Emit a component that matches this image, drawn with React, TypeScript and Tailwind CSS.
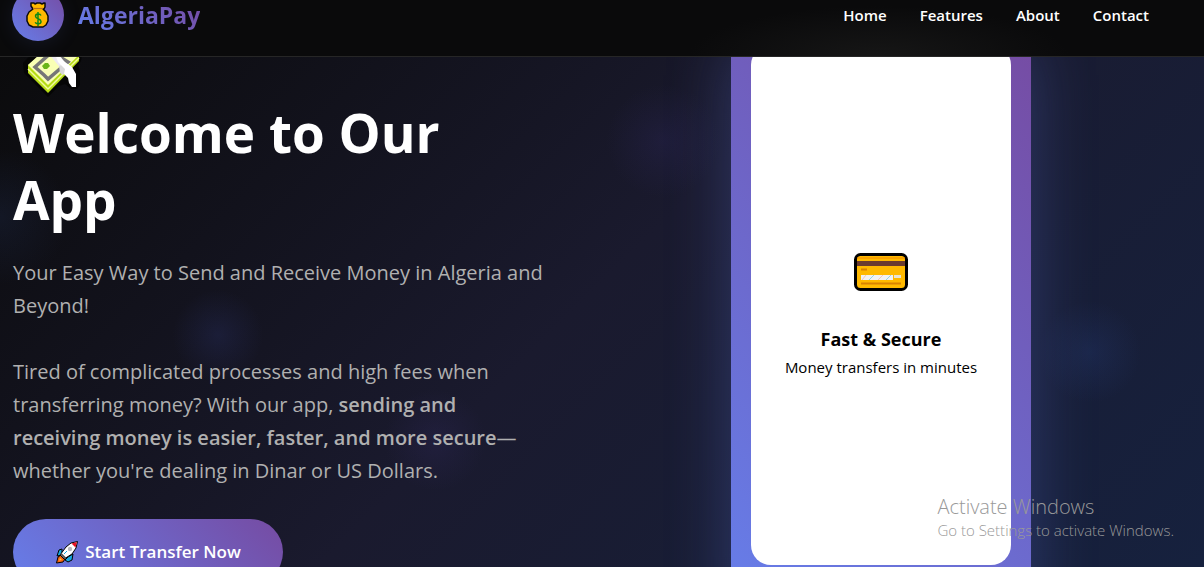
import React from "react";

function MoneyBag() {
  return (
    <svg viewBox="0 0 24 28" className="h-7 w-6" aria-hidden="true">
      <path d="M5 2h3l1 1 2-1h3l2 1 2-1h1v4l-1 2h-1l3 3 2 4v5l-2 4-3 2H7l-4-2-2-4v-5l2-4 4-3-2-3z" fill="#ffb900" stroke="#0b0b0b" strokeWidth="1.5" strokeLinejoin="round" />
      <path d="M7 7.5h10" stroke="#b8701a" strokeWidth="1.200" />
      <path d="M12 11v14M15 14.500c-1-2-5.500-2-5.500.8 0 3 5.500 2 5.500 5.200 0 3-4.800 3-5.800.8" fill="none" stroke="#0f8a16" strokeWidth="1.5" />
    </svg>
  );
}

function WingedMoney() {
  return (
    <svg viewBox="0 0 64 64" className="block size-16" aria-hidden="true">
      <path d="M1 30 24 6 50 8l10 12-1 8-3 4 2 6v14l-3 4h-6l-6-5-6 2-11 11L2 40z" fill="#050505" />
      <path d="M6 32v8l20 20 31-32v-6L30 12z" fill="#b6dc14" />
      <path d="M6 36l20 20 31-31" fill="none" stroke="#f2fba0" strokeWidth="1.500" />
      <path d="M6 32 28 12l29 10-31 30z" fill="#f9ffb5" />
      <path d="M13 34 30 19l16 10-20 17-4-4z" fill="none" stroke="#777" strokeWidth="3.500" />
      <path d="m20 33 3-3h3l2 3-3 3h-3z" fill="#69b516" />
      <path d="M26 20 41 38l5-3-9-14z" fill="#eeeaf2" />
      <path d="m37 33 6-2 3 4-5 7-3-2z" fill="#d8d8d8" />
      <path d="M32 18 43 29l7 5 4 7v13h-4l-3-4-1-5-4-4 1-5-7-7z" fill="#fff" />
    </svg>
  );
}

function CreditCard() {
  return (
    <svg viewBox="0 0 54 38" className="block h-[38px] w-[54px]" aria-hidden="true">
      <rect x="1.500" y="1.500" width="51" height="35" rx="5" fill="#ffb900" stroke="#000" strokeWidth="3" />
      <path d="M3 5h48" stroke="#f28c00" />
      <path d="M3 8h48v5H3z" fill="#6b3b30" />
      <path d="M7 16.500h6M7 30.500h40" stroke="#d98300" strokeWidth="2" />
      <path d="M7 22h32v5H7z" fill="#f2f2f2" />
      <path d="M40 22h7v3h-7z" fill="#e9e3d3" />
      <path d="m15 27 5-5m12 5 5-5" stroke="#8fd4e8" />
      <path d="m8 27 4-5m12 5 5-5" stroke="#f4c7b8" />
    </svg>
  );
}

function Rocket() {
  return (
    <svg viewBox="0 0 24 24" className="size-6" aria-hidden="true">
      <path d="m7 9-3 1-2 6 5-1zM13 17l-3 3 3 2 4-2 1-6z" fill="#16a8e0" stroke="#000" />
      <path d="m3 17-1.500 6L8 22l2-3-4-4z" fill="#f7630c" stroke="#000" />
      <path d="M4 20.500 5 18l2 2z" fill="#ffc83d" />
      <path d="M22.500 1.500 16 3l-5 4-6 8 4 4 8-5 4-6z" fill="#fff" stroke="#000" />
      <path d="m5.500 15 4 4 2-1-5-5z" fill="#555" />
      <path d="M16.500 3.500 22 2l-1.500 5.500z" fill="#e81224" />
      <circle cx="15" cy="9" r="2.200" fill="#b9b9bd" />
      <path d="m9 14 3-3" stroke="#16a8e0" />
    </svg>
  );
}

const links = ["Home", "Features", "About", "Contact"];

const glows = [
  "left-[-80px] top-[80px] bg-[radial-gradient(circle,rgba(40,60,110,0.2)_0%,transparent_60%)]",
  "left-[138px] top-[198px] bg-[radial-gradient(circle,rgba(50,60,130,0.24)_0%,transparent_40%)]",
  "left-[355px] top-[303px] bg-[radial-gradient(circle,rgba(60,50,120,0.2)_0%,transparent_45%)]",
  "left-[583px] top-[4px] bg-[radial-gradient(circle,rgba(60,50,130,0.18)_0%,transparent_50%)]",
  "left-[1010px] top-[215px] bg-[radial-gradient(circle,rgba(45,75,150,0.2)_0%,transparent_45%)]",
];

export default function App() {
  return (
    <div className="relative flex h-screen flex-col overflow-hidden bg-[linear-gradient(135deg,#0a0a0a_0%,#1a1a2e_50%,#16213e_100%)] font-['Open_Sans','Noto_Sans',sans-serif] text-white">
      <header className="relative z-10 -mt-[26px] flex h-[83px] shrink-0 items-center justify-between border-b border-[#262626] bg-[#0a0a0b] bg-[radial-gradient(190px_50px_at_73%_100%,#161616,transparent)] pl-3 pr-[55px]">
        <a href="#home" className="flex items-center gap-[14px]">
          <span className="flex size-[52px] items-center justify-center rounded-full bg-[linear-gradient(45deg,#667eea,#764ba2)] shadow-[0_4px_20px_rgba(102,126,234,0.1)]">
            <MoneyBag />
          </span>
          <span className="bg-[linear-gradient(45deg,#667eea,#764ba2)] bg-clip-text text-[23px] leading-8 font-bold text-transparent">AlgeriaPay</span>
        </a>
        <nav className="flex gap-[33px] text-[15px] leading-6 font-semibold">
          {links.map((l) => (
            <a key={l} href={"#" + l.toLowerCase()}>{l}</a>
          ))}
        </nav>
      </header>

      <main className="relative min-h-0 flex-1 overflow-hidden">
        {glows.map((g) => (
          <div key={g} className={"pointer-events-none absolute size-[160px] rounded-full " + g} />
        ))}
        <div className="relative grid grid-cols-2 items-start gap-16 pl-[13px] pr-[55px]">
          <section>
            <div className="-mt-6 pl-[9px]">
              <WingedMoney />
            </div>
            <h1 className="mt-[2px] text-[53px] leading-[67px] font-bold">Welcome to Our App</h1>
            <div className="mt-[23px] flex flex-col gap-[33px] text-[20px] leading-[33px] text-[#b0b0b0]">
              <p>Your Easy Way to Send and Receive Money in Algeria and Beyond!</p>
              <p>
                Tired of complicated processes and high fees when transferring money? With our app,{" "}
                <strong className="font-semibold">sending and <br />receiving money is easier, faster, and more secure</strong>—<wbr />whether you're dealing in Dinar or US Dollars.
              </p>
            </div>
            <button type="button" className="mt-8 flex h-[66px] w-[270px] items-center justify-center gap-[6px] rounded-full bg-[linear-gradient(45deg,#667eea,#764ba2)] text-[17px] font-semibold">
              <Rocket />
              Start Transfer Now
            </button>
          </section>

          <section className="-mt-8 flex justify-center">
            <div className="w-[300px] bg-[linear-gradient(45deg,#667eea,#764ba2)] p-5 pb-10 shadow-[0_20px_60px_rgba(102,126,234,0.3)]">
              <div className="flex h-[520px] flex-col items-center rounded-[20px] bg-white pt-[208px] text-black">
                <CreditCard />
                <h2 className="mt-[34px] text-[18px] leading-7 font-bold">Fast &amp; Secure</h2>
                <p className="text-[15px] leading-7">Money transfers in minutes</p>
              </div>
            </div>
          </section>
        </div>
      </main>

      <aside className="pointer-events-none absolute right-[30px] bottom-[26px] z-20 text-[#999999]">
        <p className="text-[20px] leading-6 font-light">Activate Windows</p>
        <p className="text-[15px] leading-[22px] font-light">Go to Settings to activate Windows.</p>
      </aside>
    </div>
  );
}
